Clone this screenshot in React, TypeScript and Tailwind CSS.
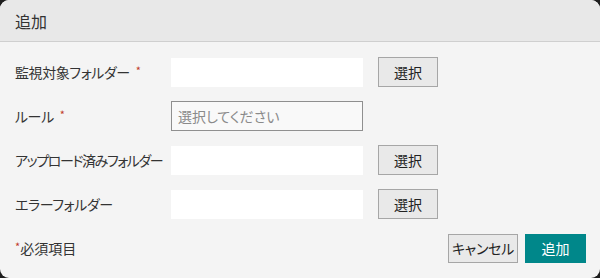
const FIELDS = [
  { label: '監視対象フォルダー', required: true, kind: 'folder', tight: false },
  { label: 'ルール', required: true, kind: 'select', tight: false },
  { label: 'アップロード済みフォルダー', required: false, kind: 'folder', tight: true },
  { label: 'エラーフォルダー', required: false, kind: 'folder', tight: false },
]

const font = "font-['Meiryo_UI','Noto_Sans_CJK_JP',sans-serif] [font-feature-settings:'palt']"

export default function App() {
  return (
    <div className="w-[600px] h-[278px] bg-[#1e1e1e]">
      <div className={`w-full h-full rounded-[9px] overflow-hidden bg-[#f4f4f4] flex flex-col text-[#333] ${font}`}>
        {/* Header */}
        <div className="h-[42px] shrink-0 bg-[#e8e8e8] border-b border-[#cfcfcf] flex items-center px-[15px]">
          <h1 className="text-[16px] leading-none text-[#333]">追加</h1>
        </div>

        {/* Form rows */}
        <div className="flex flex-col gap-[14px] pt-[15px] px-[15px]">
          {FIELDS.map(f => (
            <div key={f.label} className="flex items-center h-[30px]">
              <label className={`w-[156px] shrink-0 text-[14px] whitespace-nowrap ${f.tight ? 'tracking-[-1.4px]' : 'tracking-[-0.4px]'}`}>
                {f.label}
                {f.required && <span className="text-[#c0392b] text-[11px] ml-[6px] align-top">*</span>}
              </label>
              {f.kind === 'select' ? (
                <div className="w-[192px] h-[30px] bg-[#f9f9f9] border border-[#8f8f8f] flex items-center px-[6px] text-[14px] text-[#8a8a8a]">
                  選択してください
                </div>
              ) : (
                <>
                  <div className="w-[192px] h-[29px] bg-white" />
                  <button className="ml-[15px] w-[60px] h-[30px] bg-[#e9e9e9] border border-[#a6a6a6] text-[14px] text-[#222]">
                    選択
                  </button>
                </>
              )}
            </div>
          ))}
        </div>

        {/* Footer */}
        <div className="flex items-center justify-between pl-[15px] pr-[14px] mt-[15px]">
          <p className="text-[14px]">
            <span className="text-[#c0392b] text-[11px] align-top">*</span>必須項目
          </p>
          <div className="flex gap-[7px]">
            <button className="w-[70px] h-[29px] bg-[#e9e9e9] border border-[#a6a6a6] text-[14px] text-[#222] tracking-[-0.3px]">
              キャンセル
            </button>
            <button className="w-[61px] h-[29px] bg-[#00878a] text-[14px] text-white">
              追加
            </button>
          </div>
        </div>
      </div>
    </div>
  )
}
